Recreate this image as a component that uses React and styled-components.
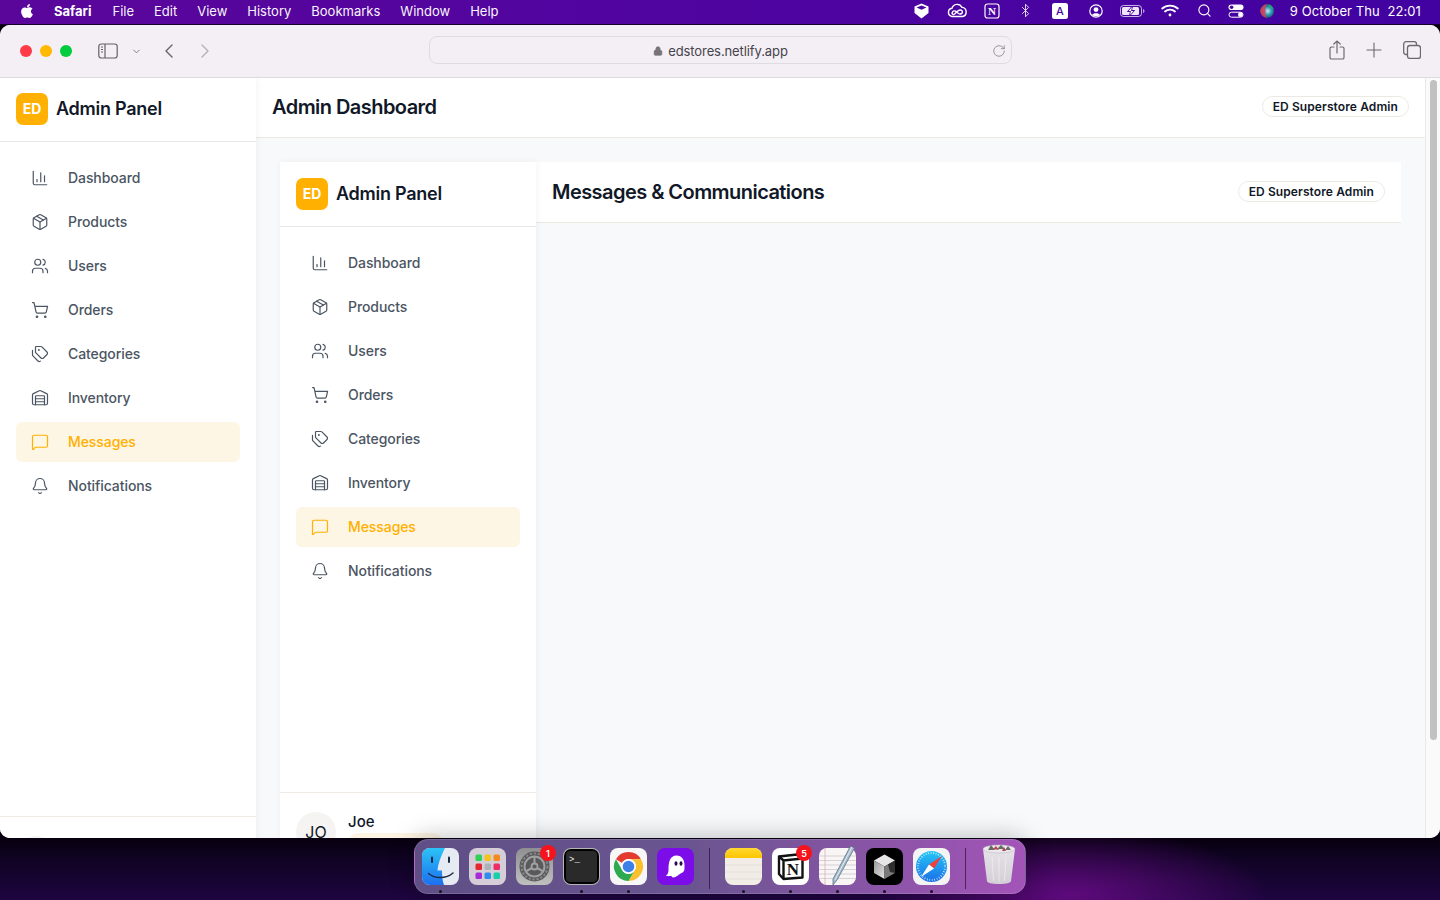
import styled, { createGlobalStyle } from "styled-components"
import { FaApple } from "react-icons/fa"
import {
  ChartColumn, Package, Users, ShoppingCart, Tags, Warehouse, MessageSquare, Bell,
  ChevronLeft, ChevronRight, ChevronDown, Lock, RotateCw, Plus, Bluetooth, Search,
} from "lucide-react"

const Global = createGlobalStyle`
  html, body { margin: 0; padding: 0; height: 100%; overflow: hidden; }
  body { font-family: Inter, "Noto Sans", sans-serif; }
  * { box-sizing: border-box; }
`

const brand = "#ffb000"

const navLinks = [
  { label: "Dashboard", icon: <ChartColumn /> },
  { label: "Products", icon: <Package /> },
  { label: "Users", icon: <Users /> },
  { label: "Orders", icon: <ShoppingCart /> },
  { label: "Categories", icon: <Tags /> },
  { label: "Inventory", icon: <Warehouse /> },
  { label: "Messages", icon: <MessageSquare />, active: true },
  { label: "Notifications", icon: <Bell /> },
]

const menuItems = ["File", "Edit", "View", "History", "Bookmarks", "Window", "Help"]

function CubeStatus() {
  return (
    <svg width="15" height="16" viewBox="0 0 15 16">
      <path d="M7.5 0.5 14.5 3.5V10L7.5 15.5 0.5 10V3.5Z" fill="#fff" />
      <path d="M2.5 4.6 7.5 6.8 12.5 4.6 7.5 2.6Z" fill="#4a05a0" />
    </svg>
  )
}

function CloudStatus() {
  return (
    <svg width="20" height="15" viewBox="0 0 20 15" fill="none" stroke="#fff" strokeWidth="1.4">
      <path d="M5 13.5A4.2 4.2 0 0 1 5 5.2 5.4 5.4 0 0 1 15 4.4 4.6 4.6 0 0 1 15.4 13.5Z" />
      <path d="M6 11.5C4 10 6 7 8.5 8.2L11.5 10.5C14 12 16.5 9.5 15 7.8 13.5 6.2 11 7.4 9 9.6 7.8 11 7 12 6 11.5Z" />
    </svg>
  )
}

function NotionStatus() {
  return (
    <svg width="16" height="16" viewBox="0 0 16 16">
      <rect x="1" y="1" width="14" height="14" rx="2.5" fill="none" stroke="#fff" strokeWidth="1.2" />
      <text x="8" y="12" textAnchor="middle" fontFamily="Liberation Serif, serif" fontWeight="700" fontSize="11" fill="#fff">N</text>
    </svg>
  )
}

function InputStatus() {
  return (
    <svg width="16" height="16" viewBox="0 0 16 16">
      <rect width="16" height="16" rx="2.5" fill="#fff" />
      <text x="8" y="12.2" textAnchor="middle" fontFamily="Inter, sans-serif" fontWeight="500" fontSize="11" fill="#4a05a0">A</text>
    </svg>
  )
}

function UserStatus() {
  return (
    <svg width="14" height="14" viewBox="0 0 14 14">
      <circle cx="7" cy="7" r="6.2" fill="none" stroke="#fff" strokeWidth="1.2" />
      <circle cx="7" cy="5.6" r="2.4" fill="#fff" />
      <path d="M3 11C4 8.8 10 8.8 11 11 9 12.8 5 12.8 3 11Z" fill="#fff" />
    </svg>
  )
}

function BatteryStatus() {
  return (
    <svg width="25" height="12" viewBox="0 0 25 12">
      <rect x=".5" y=".5" width="21" height="11" rx="3" fill="none" stroke="#fff" opacity=".7" />
      <rect x="2" y="2" width="17" height="8" rx="1.5" fill="#fff" opacity=".9" />
      <path d="M23 4V8C24 7.7 24.5 7 24.5 6 24.5 5 24 4.3 23 4Z" fill="#fff" opacity=".6" />
      <path d="M12.5 1 7.5 6.5H10.5L9.5 11 14.5 5.5H11.5Z" fill="#4a05a0" stroke="#4a05a0" />
      <path d="M12 2 8.5 6H11L10 10 13.5 6H11Z" fill="#fff" />
    </svg>
  )
}

function WifiStatus() {
  return (
    <svg width="18" height="13" viewBox="0 0 18 13" fill="none" stroke="#fff" strokeWidth="1.8" strokeLinecap="round">
      <path d="M1.2 4.5C5.5 .6 12.5 .6 16.8 4.5" />
      <path d="M4 7.5C6.8 5 11.2 5 14 7.5" />
      <circle cx="9" cy="11" r="1.4" fill="#fff" stroke="none" />
    </svg>
  )
}

function ControlStatus() {
  return (
    <svg width="16" height="14" viewBox="0 0 16 14">
      <rect x=".5" y=".5" width="15" height="5.6" rx="2.8" fill="#fff" />
      <circle cx="3.6" cy="3.3" r="1.8" fill="#4a05a0" />
      <rect x="1" y="8.2" width="14" height="5" rx="2.5" fill="none" stroke="#fff" />
      <circle cx="12.4" cy="10.7" r="2.4" fill="#fff" />
    </svg>
  )
}

function SiriStatus() {
  return (
    <svg width="14" height="14" viewBox="0 0 14 14">
      <defs>
        <radialGradient id="siri" cx=".55" cy=".5" r=".6">
          <stop offset="0" stopColor="#cfe8ff" />
          <stop offset=".45" stopColor="#2f9fb0" />
          <stop offset="1" stopColor="#1b2a55" />
        </radialGradient>
      </defs>
      <circle cx="7" cy="7" r="7" fill="url(#siri)" />
      <path d="M1 4.5C2.5 1.5 5 .4 7 .2 5 3 5 5 5.5 7 5 10 5.5 12 7 13.8 3.5 13.5 .5 10.5 .2 7 .2 6 .5 5 1 4.5Z" fill="#e8395c" opacity=".85" />
      <path d="M8 .3C10.5.8 13 3 13.6 5.5 11.5 4.5 9.5 3 8 .3Z" fill="#26b36f" opacity=".9" />
    </svg>
  )
}

const statusItems = [
  { w: 35, node: <CubeStatus /> },
  { w: 36, node: <CloudStatus /> },
  { w: 34, node: <NotionStatus /> },
  { w: 33, node: <Bluetooth size={15} strokeWidth={1.3} /> },
  { w: 36, node: <InputStatus /> },
  { w: 36, node: <UserStatus /> },
  { w: 38, node: <BatteryStatus /> },
  { w: 36, node: <WifiStatus /> },
  { w: 33, node: <Search size={15} strokeWidth={1.8} /> },
  { w: 31, node: <ControlStatus /> },
  { w: 31, node: <SiriStatus /> },
]

function SidebarToggleIcon() {
  return (
    <svg width="20" height="16" viewBox="0 0 20 16" fill="none" stroke="#65616a" strokeWidth="1.2">
      <rect x=".8" y="1" width="18.4" height="14" rx="2.5" />
      <path d="M7 1V15" />
      <path d="M3 4H5M3 6.5H5M3 9H5" strokeWidth="1" />
    </svg>
  )
}

function ShareIcon() {
  return (
    <svg width="16" height="20" viewBox="0 0 16 20" fill="none" stroke="#6c686f" strokeWidth="1.2" strokeLinecap="round">
      <path d="M5 7H2.6C1.7 7 1 7.7 1 8.6V17.4C1 18.3 1.7 19 2.6 19H13.4C14.3 19 15 18.3 15 17.4V8.6C15 7.7 14.3 7 13.4 7H11" />
      <path d="M8 13V1M4.8 4 8 1 11.2 4" />
    </svg>
  )
}

function TabsIcon() {
  return (
    <svg width="18" height="18" viewBox="0 0 18 18" fill="none" stroke="#6c686f" strokeWidth="1.3">
      <rect x="4.5" y="4.5" width="13" height="13" rx="2.5" />
      <path d="M4.5 13.5H3C1.7 13.5 .7 12.5 .7 11.2V3C.7 1.7 1.7 .7 3 .7H11.2C12.5 .7 13.5 1.7 13.5 3V4.5" />
    </svg>
  )
}

function FinderIcon() {
  return (
    <svg width="37" height="37" viewBox="0 0 37 37">
      <defs>
        <linearGradient id="finderL" x1="0" y1="0" x2="0" y2="1">
          <stop offset="0" stopColor="#2bc3f6" />
          <stop offset="1" stopColor="#1c6ff0" />
        </linearGradient>
        <clipPath id="finderClip"><rect width="37" height="37" rx="8" /></clipPath>
      </defs>
      <g clipPath="url(#finderClip)">
        <rect width="37" height="37" fill="#e6eaf2" />
        <path d="M0 0H23C19 8 16 16 15.5 22.5H20C20 28 20.5 33 22 37H0Z" fill="url(#finderL)" />
      </g>
      <path d="M10 9.5V14M27 9.5V14" stroke="#1c2b45" strokeWidth="2" strokeLinecap="round" />
      <path d="M6.5 25.5C13 31 24 31 31 25" fill="none" stroke="#1c2b45" strokeWidth="1.5" strokeLinecap="round" />
    </svg>
  )
}

function LaunchpadIcon() {
  const colors = ["#2fd158", "#f8c21c", "#f58b1e", "#e5252f", "#aeb2b6", "#ec2d67", "#a62cd4", "#2f8df0", "#18cfa8"]
  return (
    <svg width="37" height="37" viewBox="0 0 37 37">
      <rect width="37" height="37" rx="8" fill="#d5cdd8" />
      {colors.map((c, i) => (
        <rect key={c} x={6.5 + (i % 3) * 9} y={6.5 + Math.floor(i / 3) * 9} width="6.5" height="6.5" rx="1.5" fill={c} />
      ))}
    </svg>
  )
}

function SettingsIcon() {
  return (
    <svg width="37" height="37" viewBox="0 0 37 37">
      <defs>
        <linearGradient id="settingsBg" x1="0" y1="0" x2="0" y2="1">
          <stop offset="0" stopColor="#8f8f91" />
          <stop offset="1" stopColor="#c0c0bf" />
        </linearGradient>
      </defs>
      <rect width="37" height="37" rx="8" fill="url(#settingsBg)" />
      <circle cx="18.5" cy="18.5" r="15" fill="#59595b" />
      <circle cx="18.5" cy="18.5" r="13" fill="none" stroke="#86868a" strokeWidth="2" strokeDasharray="2.4 1.6" />
      <circle cx="18.5" cy="18.5" r="10" fill="none" stroke="#a0a0a2" strokeWidth="2" />
      <circle cx="18.5" cy="18.5" r="3" fill="none" stroke="#a0a0a2" strokeWidth="1.8" />
      <path d="M18.5 15.5V8.5M21 20 27.5 23.5M16 20 9.5 23.5" stroke="#a0a0a2" strokeWidth="2" />
    </svg>
  )
}

function TerminalIcon() {
  return (
    <svg width="37" height="37" viewBox="0 0 37 37">
      <rect width="37" height="37" rx="8" fill="#b4b7b6" />
      <rect x="1" y="1" width="35" height="35" rx="7" fill="#000" />
      <rect x="3" y="3" width="31" height="31" rx="4" fill="#2a2a2a" />
      <text x="6" y="14" fontFamily="Liberation Mono, monospace" fontSize="9" fill="#f2f2f2">&gt;_</text>
    </svg>
  )
}

function ChromeIcon() {
  return (
    <svg width="37" height="37" viewBox="0 0 37 37">
      <rect width="37" height="37" rx="8" fill="#f7f7f7" />
      <path d="M18.5 4A14.5 14.5 0 0 1 31.06 11.25H18.5A7.25 7.25 0 0 0 12.22 14.88L5.94 11.25A14.5 14.5 0 0 1 18.5 4Z" fill="#e33b2e" />
      <path d="M31.06 11.25A14.5 14.5 0 0 1 18.5 33L24.78 22.12A7.25 7.25 0 0 0 24.78 14.88 7.25 7.25 0 0 0 18.5 11.25Z" fill="#fbc02d" />
      <path d="M18.5 33A14.5 14.5 0 0 1 5.94 11.25L12.22 22.12A7.25 7.25 0 0 0 24.78 22.12Z" fill="#2da94f" />
      <circle cx="18.5" cy="18.5" r="7.5" fill="#fff" />
      <circle cx="18.5" cy="18.5" r="5.8" fill="#3f7fe8" />
    </svg>
  )
}

function GhostIcon() {
  return (
    <svg width="37" height="37" viewBox="0 0 37 37">
      <rect width="37" height="37" rx="8" fill="#7c0ce8" />
      <path d="M19.5 7.5C25 7.5 27.5 12 27.5 17 27.5 21 28 23.5 24.5 25 22 26 19.5 29.5 16 29.5 14.8 29.5 15.2 28 14 28 12.5 28 9.5 28.5 9 27.5 11 26.5 11.5 24 11.5 21.5 11.5 14 13 7.5 19.5 7.5Z" fill="#fff" />
      <ellipse cx="19" cy="15.5" rx="1.5" ry="2.2" fill="#2a0a4a" />
      <ellipse cx="24" cy="15.5" rx="1.5" ry="2.2" fill="#2a0a4a" />
    </svg>
  )
}

function NotesIcon() {
  return (
    <svg width="37" height="37" viewBox="0 0 37 37">
      <defs>
        <clipPath id="notesClip"><rect width="37" height="37" rx="8" /></clipPath>
        <linearGradient id="notesTop" x1="0" y1="0" x2="0" y2="1">
          <stop offset="0" stopColor="#ffd92e" />
          <stop offset="1" stopColor="#fdc400" />
        </linearGradient>
      </defs>
      <g clipPath="url(#notesClip)">
        <rect width="37" height="37" fill="#f1ece6" />
        <rect width="37" height="10" fill="url(#notesTop)" />
        <path d="M0 17H37M0 24H37M0 31H37" stroke="#dcd7d1" strokeWidth=".6" />
      </g>
    </svg>
  )
}

function NotionIcon() {
  return (
    <svg width="37" height="37" viewBox="0 0 37 37">
      <rect width="37" height="37" rx="8" fill="#fff" />
      <path d="M7 8.5 25 6.5 30.5 10.5V29.5L11.5 31 7 26Z" fill="#fff" stroke="#111" strokeWidth="2.4" strokeLinejoin="round" />
      <path d="M7 8.5 11.5 12.5 30.5 10.5M11.5 12.5V31" fill="none" stroke="#111" strokeWidth="2.4" />
      <text x="21" y="27" textAnchor="middle" fontFamily="Liberation Serif, serif" fontWeight="700" fontSize="17" fill="#111">N</text>
    </svg>
  )
}

function TextEditIcon() {
  return (
    <svg width="37" height="37" viewBox="0 0 37 37" overflow="visible">
      <rect width="37" height="37" rx="8" fill="#f8f5f4" />
      <path d="M0 8H37M0 12.5H37M0 17H37M0 21.5H37M0 26H37M0 30.5H37" stroke="#c3c3cb" strokeWidth=".7" />
      <path d="M6 0V37" stroke="#e7a7a7" strokeWidth=".7" />
      <path d="M31.5 -2 35.5 0 18 32 14 37 14 31Z" fill="#a6bccd" stroke="#5d7283" strokeWidth=".8" />
      <path d="M33 -1 16 32" stroke="#e3edf4" strokeWidth="1" />
    </svg>
  )
}

function BlockIcon() {
  return (
    <svg width="37" height="37" viewBox="0 0 37 37">
      <defs>
        <linearGradient id="blockLeft" x1="0" y1="0" x2="1" y2="1">
          <stop offset="0" stopColor="#9a9a9a" />
          <stop offset="1" stopColor="#e4e4e4" />
        </linearGradient>
      </defs>
      <rect width="37" height="37" rx="8" fill="#000" />
      <path d="M18.5 6.5 29 12.5 18.5 18.5 8 12.5Z" fill="#e6e6e6" />
      <path d="M8 12.5 18.5 18.5V31L8 25Z" fill="url(#blockLeft)" />
      <path d="M29 12.5V25L18.5 31V18.5Z" fill="#7a7a7a" />
      <path d="M29 12.5 22 16.5 24 24 29 25Z" fill="#2e2e2e" />
    </svg>
  )
}

function SafariIcon() {
  return (
    <svg width="37" height="37" viewBox="0 0 37 37">
      <defs>
        <linearGradient id="safariBg" x1="0" y1="0" x2="0" y2="1">
          <stop offset="0" stopColor="#26c6f8" />
          <stop offset="1" stopColor="#1a6fe6" />
        </linearGradient>
      </defs>
      <rect width="37" height="37" rx="8" fill="#f4f4f5" />
      <circle cx="18.5" cy="18.5" r="15.5" fill="url(#safariBg)" />
      <circle cx="18.5" cy="18.5" r="13.5" fill="none" stroke="#fff" strokeWidth="2" strokeDasharray=".7 1.8" opacity=".85" />
      <path d="M29 8 16 16.5 21 20.5Z" fill="#f0403a" />
      <path d="M8 29 16 16.5 21 20.5Z" fill="#fff" />
    </svg>
  )
}

function TrashIcon() {
  return (
    <svg width="37" height="37" viewBox="0 0 37 37" overflow="visible">
      <defs>
        <linearGradient id="trashBody" x1="0" y1="0" x2="0" y2="1">
          <stop offset="0" stopColor="#e6e2e8" />
          <stop offset="1" stopColor="#d3cfd6" />
        </linearGradient>
      </defs>
      <path d="M2 1 6 33C6.5 35 10 36 18 36S29.5 35 30 33L34 1Z" fill="url(#trashBody)" />
      <ellipse cx="18" cy="1" rx="16" ry="4" fill="#ece8ee" stroke="#bdb8c2" strokeWidth=".6" />
      <path d="M7 2 10 -3 14 2ZM16 1 20 -3 24 1ZM24 2 27 -2 30 2Z" fill="#626e64" />
      <path d="M12 1 15 -2 18 2ZM21 3 23 -1 25 3Z" fill="#b7464c" />
      <path d="M11 9 12.5 33M18 9V34M25 9 23.5 33" stroke="#fff" strokeWidth="1" opacity=".45" />
    </svg>
  )
}

const dockApps = [
  { id: "finder", node: <FinderIcon />, open: true },
  { id: "launchpad", node: <LaunchpadIcon /> },
  { id: "settings", node: <SettingsIcon />, badge: 1 },
  { id: "terminal", node: <TerminalIcon />, open: true },
  { id: "chrome", node: <ChromeIcon />, open: true },
  { id: "ghost", node: <GhostIcon /> },
  { id: "sep1", separator: true },
  { id: "notes", node: <NotesIcon />, open: true },
  { id: "notion", node: <NotionIcon />, open: true, badge: 5 },
  { id: "textedit", node: <TextEditIcon />, open: true },
  { id: "block", node: <BlockIcon />, open: true },
  { id: "safari", node: <SafariIcon />, open: true },
  { id: "sep2", separator: true },
  { id: "trash", node: <TrashIcon /> },
]

function AdminSidebar({ height, nested }) {
  return (
    <Side $height={height}>
      <Brand $nested={nested}>
        <BrandMark>ED</BrandMark>
        <BrandName>Admin Panel</BrandName>
      </Brand>
      <Nav>
        {navLinks.map(({ label, icon, active }) => (
          <NavItem key={label} $active={active}>
            <NavIcon>{icon}</NavIcon>
            <NavLabel>{label}</NavLabel>
          </NavItem>
        ))}
      </Nav>
      <SideFooter>
        {nested ? (
          <>
            <Avatar>JO</Avatar>
            <UserInfo>
              <UserName>Joe</UserName>
              <RolePill />
            </UserInfo>
          </>
        ) : (
          <Avatar />
        )}
      </SideFooter>
    </Side>
  )
}

export default function App() {
  return (
    <Desktop>
      <Global />
      <MenuBar>
        <MenuLeft>
          <AppleSlot><FaApple size={16} /></AppleSlot>
          <MenuApp>Safari</MenuApp>
          {menuItems.map((m) => <MenuItem key={m}>{m}</MenuItem>)}
        </MenuLeft>
        <MenuRight>
          {statusItems.map(({ w, node }, i) => <StatusSlot key={i} $w={w}>{node}</StatusSlot>)}
          <Clock>9 October Thu&nbsp;&nbsp;22:01</Clock>
        </MenuRight>
      </MenuBar>

      <BrowserWindow>
        <Toolbar>
          <Lights>
            <Light $c="#ff3b47" />
            <Light $c="#ffb900" />
            <Light $c="#00cc3f" />
          </Lights>
          <ToolGroup>
            <SidebarToggleIcon />
            <ChevronDown size={11} strokeWidth={2} color="#77737b" />
          </ToolGroup>
          <NavArrows>
            <ChevronLeft size={24} strokeWidth={1.4} color="#66626a" />
            <ChevronRight size={24} strokeWidth={1.4} color="#b4b0b8" />
          </NavArrows>
          <UrlBar>
            <Lock size={10} fill="#77737b" color="#77737b" />
            <span>edstores.netlify.app</span>
            <Reload><RotateCw size={14} strokeWidth={1.2} color="#77737b" /></Reload>
          </UrlBar>
          <ToolRight>
            <ShareIcon />
            <Plus size={24} strokeWidth={1.1} color="#6c686f" />
            <TabsIcon />
          </ToolRight>
        </Toolbar>

        <Viewport>
          <Page>
            <AdminSidebar height={824} />
            <Main>
              <TopBar>
                <PageTitle>Admin Dashboard</PageTitle>
                <StoreChip>ED Superstore Admin</StoreChip>
              </TopBar>
              <Content>
                <Frame>
                  <AdminSidebar height={716} nested />
                  <Main>
                    <TopBar $nested>
                      <PageTitle>Messages &amp; Communications</PageTitle>
                      <StoreChip>ED Superstore Admin</StoreChip>
                    </TopBar>
                  </Main>
                </Frame>
              </Content>
            </Main>
          </Page>
          <ScrollTrack><ScrollThumb /></ScrollTrack>
        </Viewport>
      </BrowserWindow>

      <DockRow>
        <Dock>
          {dockApps.map((app) => app.separator ? (
            <DockSeparator key={app.id} />
          ) : (
            <DockApp key={app.id}>
              {app.node}
              {app.badge && <DockBadge>{app.badge}</DockBadge>}
              <DockDot $on={app.open} />
            </DockApp>
          ))}
        </Dock>
      </DockRow>
    </Desktop>
  )
}

const Desktop = styled.div`
  width: 1440px;
  height: 900px;
  display: flex;
  flex-direction: column;
  overflow: hidden;
  background:
    radial-gradient(ellipse 200px 65px at 1070px 895px, #5e0a7c 0%, rgba(94, 10, 124, 0) 100%),
    linear-gradient(180deg, #08000f 838px, #0e0320 855px, #1e0540 900px);
`

const MenuBar = styled.div`
  height: 25px;
  flex: none;
  display: flex;
  align-items: center;
  justify-content: space-between;
  padding: 0 19px 3px 0;
  color: #fff;
  font-size: 13px;
  background: linear-gradient(90deg, #5a069b 0%, #4f04a0 50%, #4102a1 100%);
  border-bottom: 1px solid #16022e;
`

const MenuLeft = styled.div`
  display: flex;
  align-items: center;
`

const AppleSlot = styled.div`
  width: 54px;
  padding-left: 19px;
  display: flex;
  align-items: center;
`

const MenuApp = styled.span`
  font-weight: 700;
  margin-right: 21px;
`

const MenuItem = styled.span`
  font-weight: 400;
  margin-right: 20px;
  opacity: 0.96;
`

const MenuRight = styled.div`
  display: flex;
  align-items: center;
`

const StatusSlot = styled.div`
  width: ${(p) => p.$w}px;
  display: flex;
  justify-content: center;
  align-items: center;
`

const Clock = styled.span`
  margin-left: 7px;
  letter-spacing: 0.1px;
  white-space: nowrap;
`

const BrowserWindow = styled.div`
  flex: 1;
  min-height: 0;
  display: flex;
  flex-direction: column;
  border-radius: 10px;
  overflow: hidden;
  background: #fff;
`

const Toolbar = styled.div`
  height: 53px;
  flex: none;
  display: flex;
  align-items: center;
  background: #f3eff5;
  border-bottom: 1px solid #dedade;
`

const Lights = styled.div`
  display: flex;
  gap: 8px;
  padding-left: 20px;
  width: 98px;
`

const Light = styled.span`
  width: 12px;
  height: 12px;
  border-radius: 50%;
  background: ${(p) => p.$c};
`

const ToolGroup = styled.div`
  display: flex;
  align-items: center;
  gap: 13px;
  width: 59px;
`

const NavArrows = styled.div`
  display: flex;
  align-items: center;
  gap: 12px;
  width: 272px;
`

const UrlBar = styled.div`
  width: 583px;
  height: 28px;
  margin-bottom: 2px;
  padding-top: 2px;
  position: relative;
  display: flex;
  align-items: center;
  justify-content: center;
  gap: 5px;
  border: 1px solid #dfdbe2;
  border-radius: 8px;
  background: #f3eff5;
  color: #47444b;
  font-size: 13px;
  letter-spacing: -0.1px;
`

const Reload = styled.span`
  position: absolute;
  right: 5px;
  top: 7px;
  display: flex;
`

const ToolRight = styled.div`
  flex: 1;
  display: flex;
  align-items: center;
  justify-content: flex-end;
  gap: 17px;
  padding: 0 19px 2px 0;
`

const Viewport = styled.div`
  flex: 1;
  min-height: 0;
  display: flex;
`

const Page = styled.div`
  flex: 1;
  min-width: 0;
  display: flex;
  align-items: flex-start;
  background: #f8f9fb;
  overflow: hidden;
`

const Side = styled.aside`
  width: 256px;
  flex: none;
  height: ${(p) => p.$height}px;
  position: relative;
  display: flex;
  flex-direction: column;
  background: #fff;
  box-shadow: 1px 0 8px rgba(0, 0, 0, 0.05);
`

const Brand = styled.div`
  height: ${(p) => (p.$nested ? 65 : 64)}px;
  flex: none;
  display: flex;
  align-items: center;
  gap: 8px;
  padding: 0 16px ${(p) => (p.$nested ? 1 : 2)}px;
  border-bottom: 1px solid #e8e8e8;
`

const BrandMark = styled.div`
  width: 32px;
  height: 32px;
  border-radius: 7px;
  display: flex;
  align-items: center;
  justify-content: center;
  background: ${brand};
  color: #fff;
  font-size: 14px;
  font-weight: 700;
`

const BrandName = styled.div`
  font-size: 18px;
  font-weight: 600;
  letter-spacing: -0.25px;
  color: #111827;
`

const Nav = styled.nav`
  flex: 1;
  display: flex;
  flex-direction: column;
  gap: 4px;
  padding: 16px;
`

const NavItem = styled.div`
  height: 40px;
  display: flex;
  align-items: center;
  gap: 16px;
  padding: 0 12px;
  border-radius: 6px;
  font-size: 14px;
  font-weight: 500;
  letter-spacing: -0.08px;
  color: ${(p) => (p.$active ? brand : "#4b5563")};
  background: ${(p) => (p.$active ? "#fef6e5" : "transparent")};
`

const NavIcon = styled.span`
  width: 24px;
  display: flex;
  justify-content: center;
  svg {
    width: 18px;
    height: 18px;
    stroke-width: 1.6;
  }
`

const NavLabel = styled.span`
  margin-bottom: 2px;
`

const SideFooter = styled.div`
  height: 86px;
  flex: none;
  display: flex;
  gap: 12px;
  padding: 19px 16px;
  border-top: 1px solid #efeae3;
`

const Avatar = styled.div`
  width: 40px;
  height: 40px;
  border-radius: 50%;
  display: flex;
  align-items: center;
  justify-content: center;
  background: #f5f4f2;
  color: #111827;
  font-size: 16px;
`

const UserInfo = styled.div`
  display: flex;
  flex-direction: column;
  gap: 2px;
`

const UserName = styled.div`
  font-size: 15px;
  font-weight: 500;
  color: #111827;
`

const RolePill = styled.div`
  width: 95px;
  height: 20px;
  border-radius: 10px;
  background: #fdf4e3;
`

const Main = styled.main`
  flex: 1;
  min-width: 0;
  display: flex;
  flex-direction: column;
`

const TopBar = styled.header`
  height: ${(p) => (p.$nested ? 61 : 60)}px;
  flex: none;
  display: flex;
  align-items: center;
  justify-content: space-between;
  padding: 0 16px ${(p) => (p.$nested ? 1 : 2)}px;
  background: #fff;
  border-bottom: 1px solid #ece9e3;
`

const PageTitle = styled.h1`
  margin: 0;
  font-size: 20px;
  font-weight: 600;
  letter-spacing: -0.55px;
  color: #111827;
`

const StoreChip = styled.div`
  height: 21px;
  display: flex;
  align-items: center;
  padding: 0 10px;
  border: 1px solid #ece9e3;
  border-radius: 11px;
  background: #fff;
  font-size: 12px;
  font-weight: 600;
  letter-spacing: 0.1px;
  color: #111827;
`

const Content = styled.div`
  padding: 24px;
`

const Frame = styled.div`
  display: flex;
  align-items: flex-start;
  background: #f8f9fb;
`

const ScrollTrack = styled.div`
  width: 15px;
  flex: none;
  padding: 2px 3px 0 4px;
  background: #fafafa;
  border-left: 1px solid #e9e9e9;
`

const ScrollThumb = styled.div`
  height: 660px;
  border-radius: 4px;
  background: #c1c1c1;
`

const DockRow = styled.div`
  height: 62px;
  flex: none;
  position: relative;
  display: flex;
  justify-content: center;
  padding-top: 1px;
`

const Dock = styled.div`
  width: 612px;
  height: 55px;
  display: flex;
  gap: 10px;
  padding: 8px 7px 0;
  border-radius: 14px;
  border: 1px solid rgba(255, 255, 255, 0.14);
  background: linear-gradient(90deg, #5f4f86 0%, #6a5590 45%, #a354b8 100%);
  box-shadow: 0 -2px 24px rgba(0, 0, 0, 0.25);
`

const DockApp = styled.div`
  width: 37px;
  height: 46px;
  position: relative;
  display: flex;
  flex-direction: column;
  align-items: center;
  gap: 5px;
  flex: none;
`

const DockBadge = styled.span`
  position: absolute;
  top: -3px;
  right: -3px;
  width: 16px;
  height: 16px;
  border-radius: 50%;
  display: flex;
  align-items: center;
  justify-content: center;
  background: #f5141c;
  color: #fff;
  font-size: 9px;
  font-weight: 600;
`

const DockDot = styled.span`
  width: 3px;
  height: 3px;
  border-radius: 50%;
  background: ${(p) => (p.$on ? "#14101c" : "transparent")};
`

const DockSeparator = styled.div`
  width: 1px;
  height: 41px;
  margin: 0 5px;
  background: rgba(30, 15, 45, 0.65);
  flex: none;
`
